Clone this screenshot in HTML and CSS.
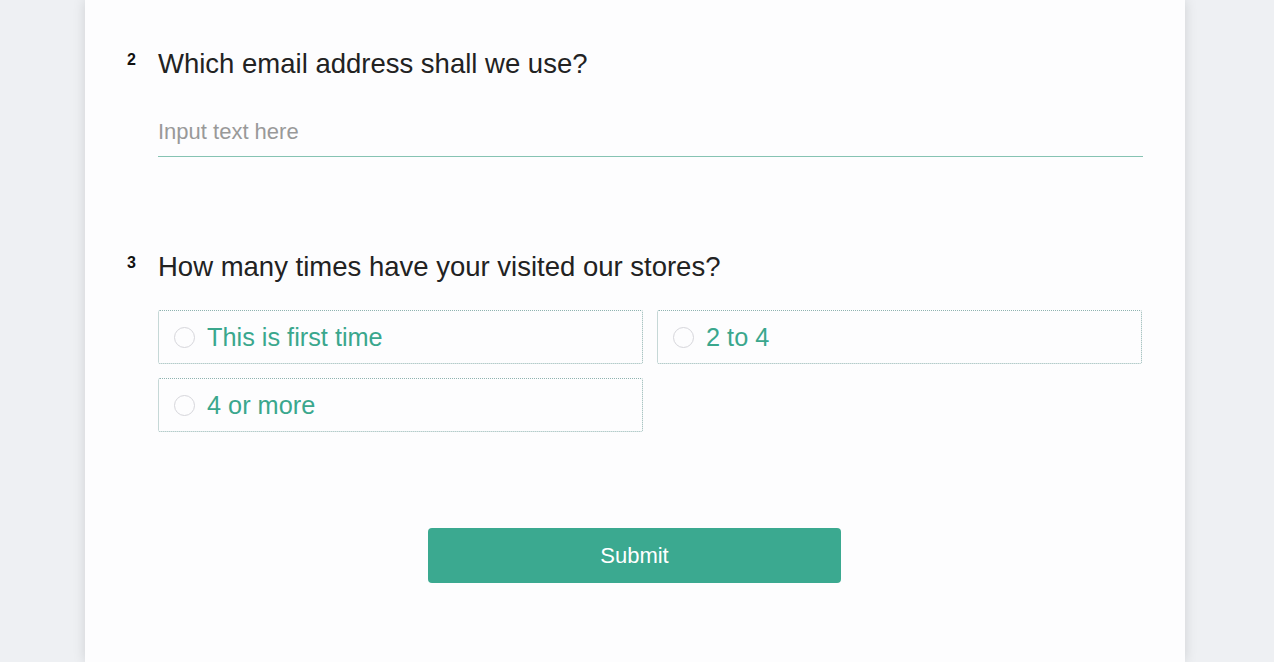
FILE: index.html
```html
<!DOCTYPE html>
<html>
<head>
<meta charset="utf-8">
<link rel="stylesheet" href="styles.css">
</head>
<body>
<div class="page">
  <main class="card">
    <section class="question q-email">
      <div class="q-head">
        <span class="q-num">2</span>
        <h2 class="q-title">Which email address shall we use?</h2>
      </div>
      <div class="q-body">
        <input class="text-input" type="text" placeholder="Input text here">
      </div>
    </section>
    <section class="question q-visits">
      <div class="q-head">
        <span class="q-num">3</span>
        <h2 class="q-title">How many times have your visited our stores?</h2>
      </div>
      <div class="q-body options">
        <label class="option"><span class="radio"></span><span class="opt-text">This is first time</span></label>
        <label class="option"><span class="radio"></span><span class="opt-text">2 to 4</span></label>
        <label class="option"><span class="radio"></span><span class="opt-text">4 or more</span></label>
      </div>
    </section>
    <div class="actions">
      <button class="submit" type="button">Submit</button>
    </div>
  </main>
</div>
</body>
</html>
```
FILE: styles.css
```css
html, body {
  margin: 0;
  padding: 0;
  height: 100%;
}
body {
  background: #eef0f3;
  font-family: "Liberation Sans", Arial, sans-serif;
  overflow: hidden;
}
.page {
  display: flex;
  padding-left: 85px;
  height: 100%;
}
.card {
  width: 1100px;
  background: #fdfdfe;
  box-shadow: 0 0 12px rgba(0,0,0,0.13);
  padding: 48px 42px 0 42px;
  box-sizing: border-box;
}
.question {
  display: flex;
  flex-direction: column;
}
.q-head {
  display: flex;
  align-items: flex-start;
}
.q-num {
  width: 31px;
  font-size: 16px;
  font-weight: bold;
  color: #111;
  line-height: 20px;
  padding-top: 2px;
}
.q-title {
  margin: 0;
  font-size: 27.5px;
  font-weight: normal;
  color: #222;
  line-height: 32px;
}
.q-body {
  margin-left: 31px;
}
.text-input {
  display: block;
  width: 100%;
  box-sizing: border-box;
  margin-top: 39px;
  border: none;
  border-bottom: 1px solid #86c3b3;
  background: transparent;
  font-family: "Liberation Sans", Arial, sans-serif;
  font-size: 22px;
  padding: 0 0 11px 0;
  height: 38px;
  outline: none;
}
.text-input::placeholder {
  color: #999;
}
.q-visits {
  margin-top: 94px;
}
.options {
  display: grid;
  grid-template-columns: 485px 485px;
  column-gap: 14px;
  row-gap: 14px;
  margin-top: 27px;
}
.option {
  display: flex;
  align-items: center;
  height: 54px;
  box-sizing: border-box;
  border: 1px dotted #8fb3b0;
  border-radius: 2px;
  padding-left: 15px;
}
.radio {
  width: 21px;
  height: 21px;
  border: 1.5px solid #d6d6db;
  border-radius: 50%;
  box-sizing: border-box;
  margin-right: 12px;
}
.opt-text {
  font-size: 25.3px;
  color: #3aa78d;
}
.actions {
  display: flex;
  justify-content: center;
  margin-top: 96px;
  padding-right: 1px;
}
.submit {
  width: 413px;
  height: 55px;
  background: #3ba990;
  color: #fff;
  border: none;
  border-radius: 4px;
  font-family: "Liberation Sans", Arial, sans-serif;
  font-size: 22px;
}
```
